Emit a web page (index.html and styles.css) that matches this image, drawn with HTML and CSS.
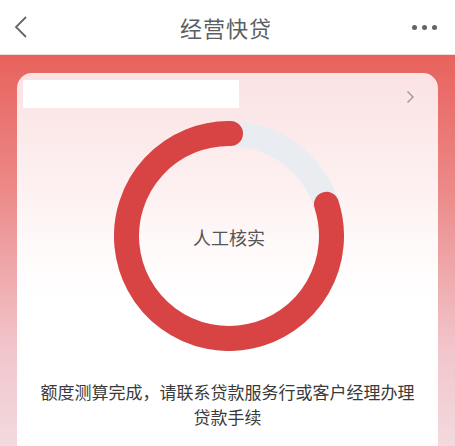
FILE: index.html
```html
<!DOCTYPE html>
<html lang="zh">
<head>
<meta charset="utf-8">
<link rel="stylesheet" href="styles.css">
</head>
<body>
<div class="page">
  <header class="nav">
    <svg class="back" width="14" height="22" viewBox="0 0 14 22"><path d="M12 1 L2 11 L12 21" fill="none" stroke="#666" stroke-width="1.8"/></svg>
    <h1 class="title">经营快贷</h1>
    <div class="more"><span></span><span></span><span></span></div>
  </header>
  <main class="main">
    <section class="card">
      <div class="card-top">
        <div class="mask"></div>
        <svg class="arrow" width="9" height="14" viewBox="0 0 9 14"><path d="M1.5 1.5 L7 7 L1.5 12.5" fill="none" stroke="#999" stroke-width="1.4"/></svg>
      </div>
      <div class="ring-wrap">
        <svg class="ring" width="230" height="230" viewBox="0 0 230 230">
          <circle cx="115" cy="115" r="102.5" fill="none" stroke="#e9edf1" stroke-width="25"/>
          <path d="M212.48 83.33 A102.5 102.5 0 1 1 116.5 12.51" fill="none" stroke="#d84343" stroke-width="25" stroke-linecap="round"/>
        </svg>
        <div class="ring-label">人工核实</div>
      </div>
      <p class="msg">额度测算完成，请联系贷款服务行或客户经理办理贷款手续</p>
    </section>
  </main>
</div>
</body>
</html>
```
FILE: styles.css
```css
* { box-sizing: border-box; }
html, body { margin: 0; padding: 0; }
body {
  width: 455px;
  height: 446px;
  overflow: hidden;
  font-family: "Noto Sans CJK SC", "Noto Sans", sans-serif;
  background: #fff;
}
.page { width: 455px; height: 446px; display: flex; flex-direction: column; }
.nav {
  height: 55px;
  flex: none;
  display: flex;
  align-items: center;
  justify-content: space-between;
  padding: 0 18px 0 14px;
  background: #fff;
  border-bottom: 1px solid #f1d9d9;
}
.back { display: block; }
.title {
  margin: 0;
  font-size: 22px;
  font-weight: 400;
  color: #5a5f63;
  letter-spacing: 1px;
  position: relative;
  left: 6px;
}
.more { display: flex; gap: 5px; }
.more span { width: 5px; height: 5px; border-radius: 50%; background: #60656a; }
.main {
  flex: 1;
  padding: 18px 17px 0 17px;
  background: linear-gradient(180deg, #e8625d 0%, #ec8a89 35%, #f1c5cb 75%, #f2dade 100%);
}
.card {
  height: 100%;
  border-radius: 15px 15px 0 0;
  background: linear-gradient(180deg, #fbe2e3 0%, #fdf0f0 30%, #fffafa 48%, #ffffff 60%);
  padding: 7px 0 0 6px;
}
.card-top {
  height: 28px;
  display: flex;
  align-items: center;
  justify-content: space-between;
  padding-right: 23px;
}
.mask { width: 216px; height: 28px; background: #fff; }
.arrow { display: block; margin-top: 6px; }
.ring-wrap {
  position: relative;
  width: 230px;
  height: 230px;
  margin: 13px 0 0 91px;
}
.ring { display: block; }
.ring-label {
  position: absolute;
  inset: 0;
  display: flex;
  align-items: center;
  justify-content: center;
  font-size: 18px;
  color: #555;
  padding-top: 2px;
}
.msg {
  margin: 28px 0 0 0;
  padding: 0 18px 0 12px;
  text-align: center;
  font-size: 17px;
  line-height: 25px;
  color: #3a3a3a;
}
```
